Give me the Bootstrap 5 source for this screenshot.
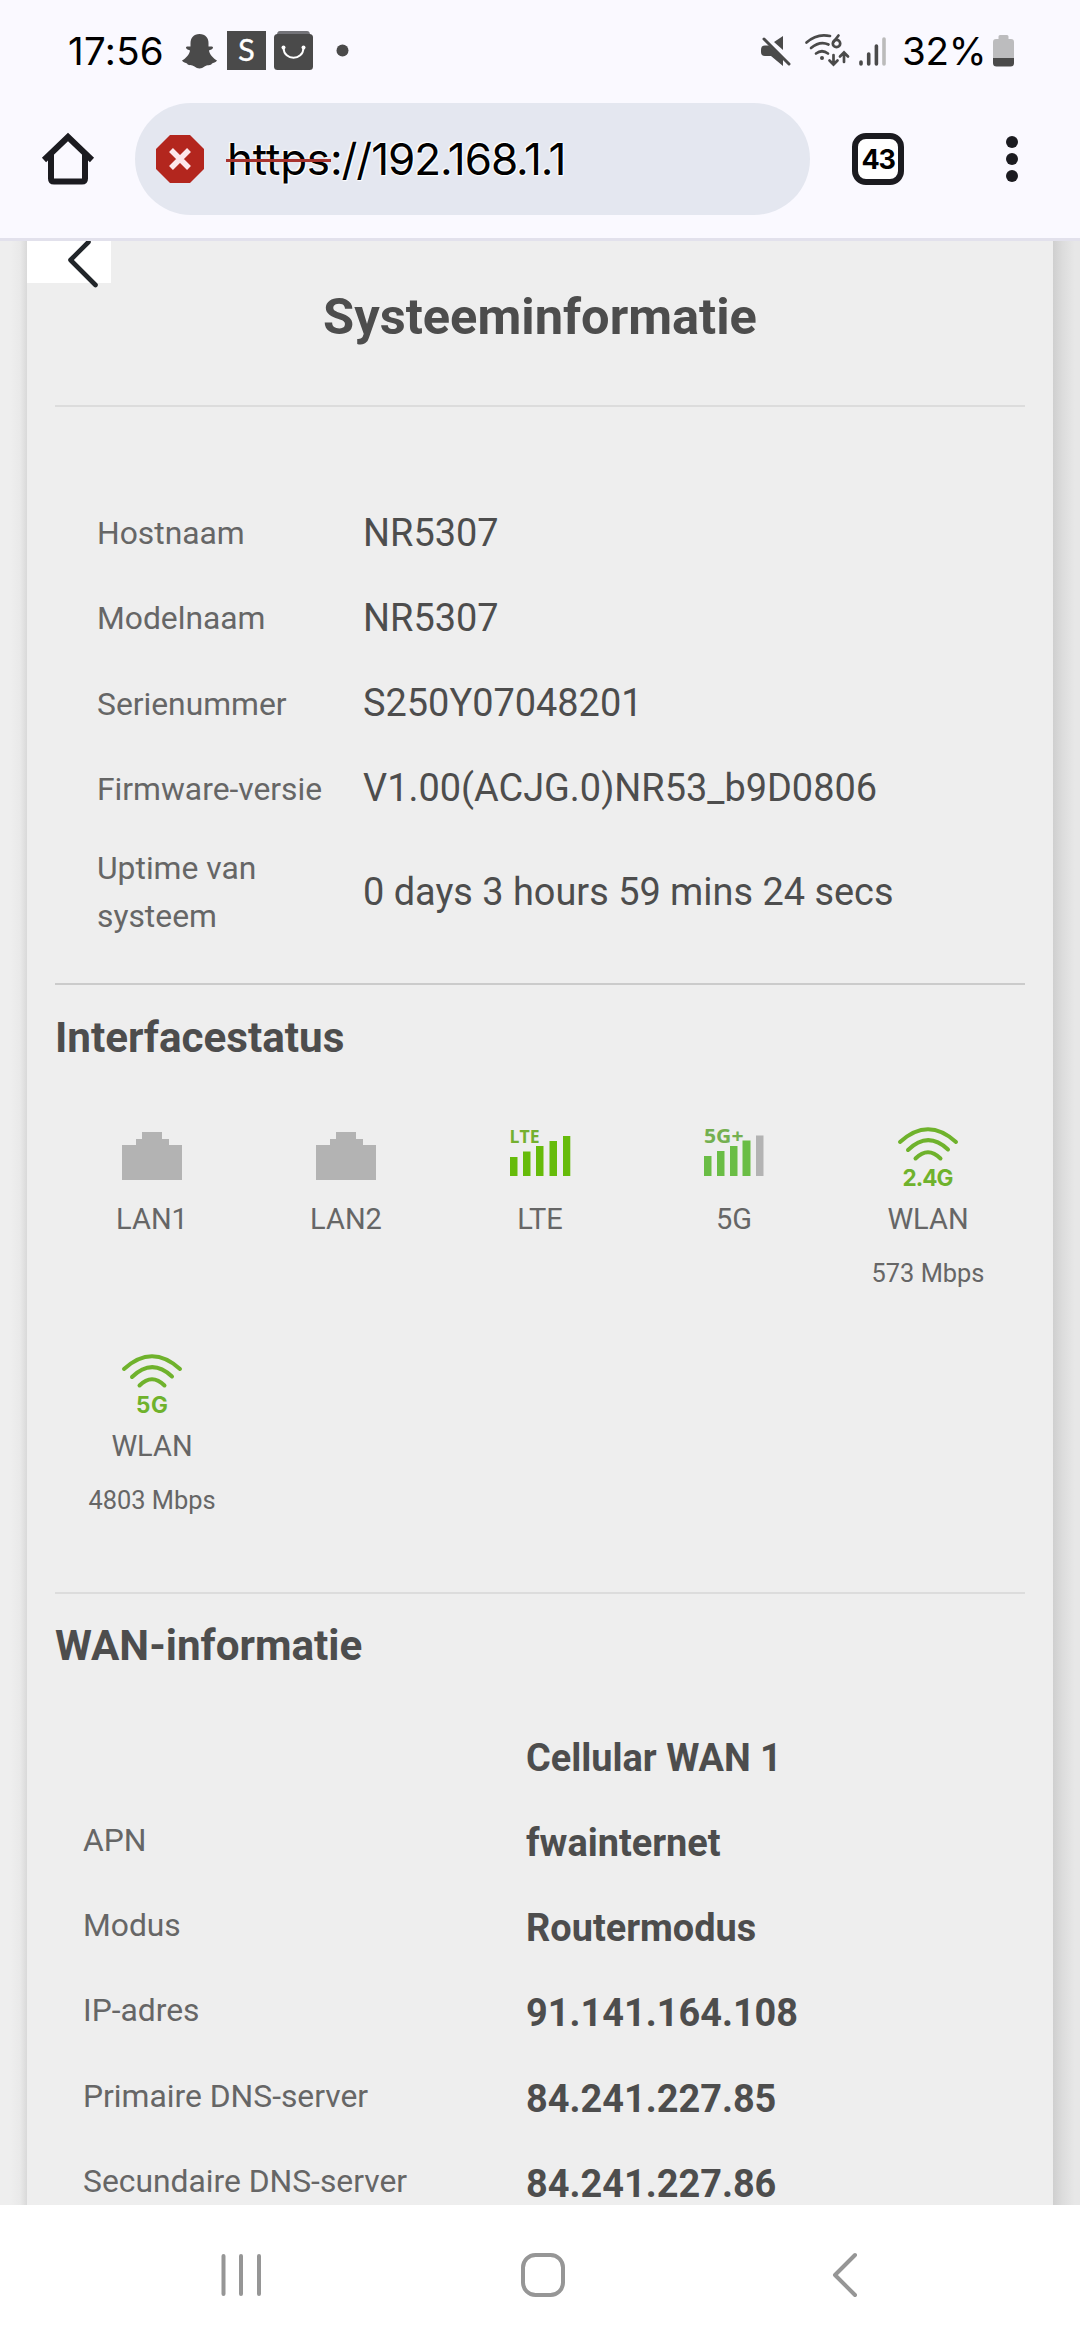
<!DOCTYPE html>
<html lang="nl">
<head>
<meta charset="utf-8">
<meta name="viewport" content="width=device-width, initial-scale=1">
<title>Systeeminformatie</title>
<link href="https://cdn.jsdelivr.net/npm/bootstrap@5.3.0/dist/css/bootstrap.min.css" rel="stylesheet">
<style>
body{width:1080px;height:2340px;overflow:hidden;background:#eee;font-family:Roboto,"Liberation Sans",sans-serif;color:#4d4d4d}
svg{display:block;flex:none;overflow:visible}
.browser-top{height:241px;background:#faf9ff;border-bottom:3px solid #e2e1ec;color:#000}
.status{height:103px;padding:0 66px 2px 68px}
.clock{font:400 38.5px/50px Inter,sans-serif;letter-spacing:.3px;width:114px}
.pct{font:400 38.5px/50px Inter,sans-serif;letter-spacing:-.3px;width:91px;padding-left:15px;white-space:nowrap}
.toolbar-row{height:112px;padding:0 60px 0 42px}
.omnibox{width:675px;height:112px;margin-left:41px;border-radius:56px;background:#e4e7f0;padding-left:21px}
.address{font:400 44px/60px Inter,sans-serif;letter-spacing:-1.05px;margin-left:23px;white-space:nowrap;text-shadow:0 0 2px #fff,0 0 3px #fff,1px 1px 1px #fff,-1px -1px 1px #fff}
.scheme{position:relative;letter-spacing:-.2px}
.scheme::after{content:"";position:absolute;left:-1px;right:-1px;top:27px;height:3px;background:#a8332e}
.tabs-count{width:52px;height:52px;margin-left:42px;border:6px solid #1b1b20;border-radius:14px;font:700 27px/1 Inter,sans-serif;letter-spacing:-1.3px;background:#fff}
.viewport{height:1964px;background:#eee}
.edge-l{width:27px;background:linear-gradient(90deg,#eee 40%,#e9e9e9 75%,#d9d9d9)}
.edge-r{width:27px;background:linear-gradient(90deg,#cfcfcf,#dcdcdc 35%,#e7e7e7 80%)}
.sheet{width:1026px;padding:46px 28px 0;position:relative}
.back{position:absolute;left:0;top:0;width:84px;height:42px;background:#fff}
.title{font-size:50.6px;line-height:60px;font-weight:700;margin:0 0 58px}
.rule{height:2px;background:#dcdcdc}
.rule-dark{background:#cbcbcb}
.heading{font-size:42.2px;line-height:50px;font-weight:700;margin:0}
.info{padding:83px 0 31px 42px}
.info-row{height:85.25px}
.info-row.tall{height:121px}
.lbl{font-size:31.8px;line-height:48px;color:#666;width:266px;flex:none;white-space:nowrap}
.info .lbl{padding-top:1px}
.val{font-size:37.9px;line-height:48px;white-space:nowrap}
.tiles{margin-top:65px;margin-bottom:10px}
.tile{width:20%;height:227px}
.tile-name{font-size:29px;line-height:48px;margin-top:7px;color:#666}
.tile-rate{font-size:25.4px;line-height:48px;margin-top:6px;color:#666}
.wan{padding:44px 0 0 28px}
.wan .lbl{width:443px;padding-bottom:6px}
.wan .val{font-weight:700;line-height:38px}
.nav-keys{height:135px;background:#fff;padding:5px 223px 0 221px}
</style>
</head>
<body>
<header class="browser-top">
  <div class="status d-flex align-items-center">
    <div class="clock">17:56</div>
    <svg width="35" height="36" viewBox="0 0 35 36" fill="#4a4a4a"><path d="M17.5 1C11.500 1 8.500 5 8.500 10V13.500C7 14 4.500 12.500 4 14.500C3.800 16 7 17 8 17.500C7.500 21.500 3.500 25.500 0 27.500C1 29.500 4 29.500 5 30.500C6 33 10 31.500 12.500 33.500C15.500 36 19.500 36 22.500 33.500C25 31.500 29 33 30 30.500C31 29.500 34 29.500 35 27.500C31.500 25.500 27.500 21.500 27 17.500C28 17 31.200 16 31 14.500C30.500 12.500 28 14 26.500 13.500V10C26.500 5 23.500 1 17.500 1Z"/></svg>
    <svg style="margin-left:10px" width="39" height="39"><rect width="39" height="39" fill="#4a4a4a"/><text x="19.500" y="30" text-anchor="middle" font-family="Lato" font-size="31" fill="#fff" stroke="#fff" stroke-width=".3">S</text></svg>
    <svg class="ms-2" width="39" height="39"><path d="M6 0H33Q36 0 36 4H3Q3 0 6 0Z" fill="#737378"/><rect y="3" width="39" height="36" rx="3.500" fill="#4a4a4a"/><path d="M9.500 17C10 30 29 30 29.500 17" fill="none" stroke="#fff" stroke-width="2"/><circle cx="9.500" cy="16.500" r="2" fill="#fff"/><circle cx="29.500" cy="16.500" r="2" fill="#fff"/></svg>
    <svg class="ms-4" width="12" height="12"><circle cx="5.500" cy="5.500" r="6" fill="#4a4a4a"/></svg>
    <svg class="ms-auto" width="30" height="30" fill="#4a4a4a"><path d="M0 14Q0 9.500 4 9.500H8L22 23V30L10 20H4Q0 20 0 16ZM22 0V14L13 6Z"/><path d="M3 3L28 28" stroke="#4a4a4a" stroke-width="3" stroke-linecap="round"/></svg>
    <svg width="44" height="33" style="margin-left:14px" fill="none" stroke="#4a4a4a" stroke-width="2.700" stroke-linecap="round"><path d="M1.500 8.500Q12-1 25 2M6 14Q15 6.500 23.500 10.500M11 19.500Q17 15 23 19.500"/><circle cx="17" cy="24" r="2" fill="#4a4a4a" stroke="none"/><path d="M28.500 21V30M24.500 26.500L28.500 30.500L32.500 26.500M39 28V19M35 22.500L39 18.500L43 22.500"/><path d="M33.500 1.500L28.500 8"/><circle cx="31.500" cy="9.500" r="3.700"/></svg>
    <svg width="28" height="30" style="margin-left:10px" stroke-width="3.600" stroke-linecap="round" stroke="#4a4a4a"><path d="M2 26V28M9.700 18V28M17.400 10V28"/><path d="M25 3V28" stroke="#bbb"/></svg>
    <div class="pct">32%</div>
    <svg width="21" height="32" style="margin-left:15px"><path d="M7 0H14Q15.500 0 15.500 1.500V4H18Q21 4 21 7V23H0V7Q0 4 3 4H5.500V1.500Q5.500 0 7 0Z" fill="#bcbcbe"/><path d="M0 23H21V28Q21 31.500 17.500 31.500H3.500Q0 31.500 0 28Z" fill="#4a4a4a"/></svg>
  </div>
  <div class="toolbar-row d-flex align-items-center">
    <svg width="52" height="52" fill="none" stroke="#1b1b20" stroke-width="6"><path d="M2 27L26 4L50 27" stroke-linejoin="miter"/><path d="M9 21V45.500Q9 48.500 12 48.500H40Q43 48.500 43 45.500V21" /></svg>
    <div class="omnibox d-flex align-items-center">
      <svg width="48" height="48"><path d="M14 0H34L48 14V34L34 48H14L0 34V14Z" fill="#b3261e"/><path d="M15 15L33 33M33 15L15 33" stroke="#fde7ec" stroke-width="5.500"/></svg>
      <div class="address"><span class="scheme">https</span>://192.168.1.1</div>
    </div>
    <div class="tabs-count d-flex align-items-center justify-content-center">43</div>
    <svg class="ms-auto" width="16" height="48" fill="#1b1b20"><circle cx="8" cy="7" r="6"/><circle cx="8" cy="24" r="6"/><circle cx="8" cy="41" r="6"/></svg>
  </div>
</header>

<main class="viewport d-flex overflow-hidden">
  <div class="edge-l"></div>
  <div class="sheet">
    <div class="back"><svg width="84" height="46" fill="none" stroke="#212529" stroke-width="4.600" stroke-linecap="round" stroke-linejoin="round"><path d="M61.500 1L43.500 19L68.500 44"/></svg></div>
    <h1 class="title text-center">Systeeminformatie</h1>
    <div class="rule"></div>
    <section class="info">
      <div class="info-row d-flex align-items-center"><div class="lbl">Hostnaam</div><div class="val">NR5307</div></div>
      <div class="info-row d-flex align-items-center"><div class="lbl">Modelnaam</div><div class="val">NR5307</div></div>
      <div class="info-row d-flex align-items-center"><div class="lbl">Serienummer</div><div class="val">S250Y07048201</div></div>
      <div class="info-row d-flex align-items-center"><div class="lbl">Firmware-versie</div><div class="val">V1.00(ACJG.0)NR53_b9D0806</div></div>
      <div class="info-row tall d-flex align-items-center"><div class="lbl">Uptime van<br>systeem</div><div class="val">0 days 3 hours 59 mins 24 secs</div></div>
    </section>
    <div class="rule rule-dark"></div>
    <h2 class="heading" style="margin-top:28px">Interfacestatus</h2>
    <section class="tiles d-flex flex-wrap text-center">
      <div class="tile d-flex flex-column align-items-center">
        <svg width="60" height="60"><path d="M20 4H40V11H47V17H60V52H0V17H14V11H20Z" fill="#b3b3b3"/></svg>
        <div class="tile-name">LAN1</div>
      </div>
      <div class="tile d-flex flex-column align-items-center">
        <svg width="60" height="60"><path d="M20 4H40V11H47V17H60V52H0V17H14V11H20Z" fill="#b3b3b3"/></svg>
        <div class="tile-name">LAN2</div>
      </div>
      <div class="tile d-flex flex-column align-items-center">
        <svg width="60" height="60"><path d="M0 29H7.500V48H0ZM13 23.500H20.500V48H13ZM26 18H33.500V48H26ZM39.500 13H47V48H39.500ZM53 8H60.300V48H53Z" fill="#66bb0a"/><text x="-.5" y="14.500" font-family="Open Sans" font-weight="700" font-size="17.500" fill="#74b030" textLength="30" lengthAdjust="spacingAndGlyphs">LTE</text></svg>
        <div class="tile-name">LTE</div>
      </div>
      <div class="tile d-flex flex-column align-items-center">
        <svg width="60" height="60"><path d="M0 28H7.500V48H0ZM13 23H20.500V48H13ZM26 18H33.500V48H26ZM38.500 12.500H46.500V48H38.500Z" fill="#6abd45"/><path d="M52 7.500H59.500V48H52Z" fill="#b3b3b3"/><text x="0" y="14.500" font-family="Open Sans" font-weight="700" font-size="19" fill="#74b050" textLength="39.500" lengthAdjust="spacingAndGlyphs">5G+</text></svg>
        <div class="tile-name">5G</div>
      </div>
      <div class="tile d-flex flex-column align-items-center">
        <svg width="60" height="60"><path d="M2 14Q30-11.500 58 14M10 22Q30 2.500 50 21.500M17.500 30.500Q30 18 42.500 30.500" fill="none" stroke="#6fb22c" stroke-width="4" stroke-linecap="round"/><text x="30" y="57.500" text-anchor="middle" font-family="Inter" font-weight="700" font-size="22.500" fill="#6fb22c" textLength="51">2.4G</text></svg>
        <div class="tile-name">WLAN</div>
        <div class="tile-rate">573 Mbps</div>
      </div>
      <div class="tile d-flex flex-column align-items-center">
        <svg width="60" height="60"><path d="M2 14Q30-11.500 58 14M10 22Q30 2.500 50 21.500M17.500 30.500Q30 18 42.500 30.500" fill="none" stroke="#6fb22c" stroke-width="4" stroke-linecap="round"/><text x="30" y="57.500" text-anchor="middle" font-family="Inter" font-weight="700" font-size="22.500" fill="#6fb22c" textLength="32">5G</text></svg>
        <div class="tile-name">WLAN</div>
        <div class="tile-rate">4803 Mbps</div>
      </div>
    </section>
    <div class="rule"></div>
    <h2 class="heading" style="margin-top:27px">WAN-informatie</h2>
    <section class="wan">
      <div class="info-row d-flex align-items-center"><div class="lbl"></div><div class="val">Cellular WAN 1</div></div>
      <div class="info-row d-flex align-items-center"><div class="lbl">APN</div><div class="val">fwainternet</div></div>
      <div class="info-row d-flex align-items-center"><div class="lbl">Modus</div><div class="val">Routermodus</div></div>
      <div class="info-row d-flex align-items-center"><div class="lbl">IP-adres</div><div class="val">91.141.164.108</div></div>
      <div class="info-row d-flex align-items-center"><div class="lbl">Primaire DNS-server</div><div class="val">84.241.227.85</div></div>
      <div class="info-row d-flex align-items-center"><div class="lbl">Secundaire DNS-server</div><div class="val">84.241.227.86</div></div>
    </section>
  </div>
  <div class="edge-r"></div>
</main>

<nav class="nav-keys d-flex align-items-center justify-content-between">
  <svg width="40" height="44" stroke="#969696" stroke-width="4" stroke-linecap="round"><path d="M2.500 3V41M20 3V41M38 3V41"/></svg>
  <svg class="me-2" width="44" height="44" fill="none" stroke="#969696" stroke-width="4"><rect x="2" y="2" width="40" height="40" rx="12.500"/></svg>
  <svg width="24" height="44" fill="none" stroke="#969696" stroke-width="4" stroke-linecap="round" stroke-linejoin="round"><path d="M22 2L2 22L22 42"/></svg>
</nav>
<script src="https://cdn.jsdelivr.net/npm/bootstrap@5.3.0/dist/js/bootstrap.bundle.min.js"></script>
</body>
</html>
